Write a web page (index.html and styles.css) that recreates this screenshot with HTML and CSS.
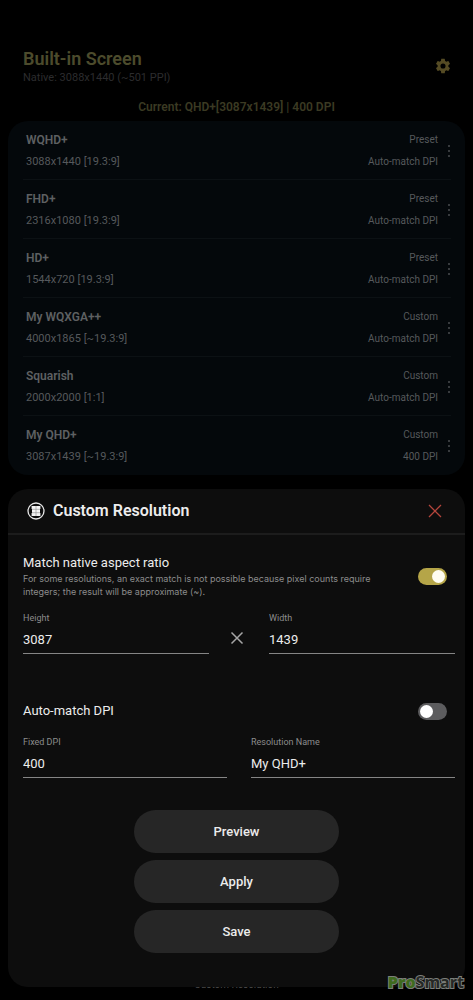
FILE: index.html
```html
<!DOCTYPE html>
<html lang="en">
<head>
<meta charset="utf-8">
<meta name="viewport" content="width=device-width, initial-scale=1">
<title>Custom Resolution</title>
<link rel="stylesheet" href="styles.css">
</head>
<body>
<div class="app">
  <header class="top">
    <div>
      <h1 class="top-title">Built-in Screen</h1>
      <p class="top-native">Native: 3088x1440 (~501 PPI)</p>
    </div>
    <button class="icon-btn gear" aria-label="Settings">
      <svg viewBox="0 0 24 24" width="18" height="18"><path fill="currentColor" d="M19.14 12.94c.04-.3.06-.61.06-.94s-.02-.64-.07-.94l2.03-1.58a.49.49 0 0 0 .12-.61l-1.92-3.32a.49.49 0 0 0-.59-.22l-2.39.96a7 7 0 0 0-1.62-.94l-.36-2.54A.48.48 0 0 0 13.920 2.400h-3.840c-.24 0-.43.17-.47.41l-.36 2.540c-.59.24-1.130.57-1.620.94l-2.390-.96a.48.48 0 0 0-.59.22L2.740 8.870a.48.48 0 0 0 .12.61l2.030 1.580c-.05.3-.09.63-.09.94s.02.64.07.94l-2.030 1.580a.49.49 0 0 0-.12.610l1.920 3.320c.12.22.37.29.59.22l2.390-.96c.5.38 1.030.7 1.620.94l.36 2.540c.05.24.24.41.48.41h3.840c.24 0 .44-.17.47-.41l.36-2.540a6.700 6.700 0 0 0 1.620-.94l2.390.96c.22.08.47 0 .59-.22l1.920-3.320a.48.48 0 0 0-.12-.61zM12 15.400a3.400 3.400 0 1 1 0-6.800 3.400 3.400 0 0 1 0 6.800z"/></svg>
    </button>
  </header>
  <p class="current">Current: QHD+[3087x1439] | 400 DPI</p>

  <ul class="presets">
    <li class="preset">
      <div class="lines"><strong>WQHD+</strong><span>3088x1440 [19.3:9]</span></div>
      <div class="lines meta"><span>Preset</span><span>Auto-match DPI</span></div>
      <button class="icon-btn more" aria-label="More options for WQHD+"><i></i><i></i><i></i></button>
    </li>
    <li class="preset">
      <div class="lines"><strong>FHD+</strong><span>2316x1080 [19.3:9]</span></div>
      <div class="lines meta"><span>Preset</span><span>Auto-match DPI</span></div>
      <button class="icon-btn more" aria-label="More options for FHD+"><i></i><i></i><i></i></button>
    </li>
    <li class="preset">
      <div class="lines"><strong>HD+</strong><span>1544x720 [19.3:9]</span></div>
      <div class="lines meta"><span>Preset</span><span>Auto-match DPI</span></div>
      <button class="icon-btn more" aria-label="More options for HD+"><i></i><i></i><i></i></button>
    </li>
    <li class="preset">
      <div class="lines"><strong>My WQXGA++</strong><span>4000x1865 [~19.3:9]</span></div>
      <div class="lines meta"><span>Custom</span><span>Auto-match DPI</span></div>
      <button class="icon-btn more" aria-label="More options for My WQXGA++"><i></i><i></i><i></i></button>
    </li>
    <li class="preset">
      <div class="lines"><strong>Squarish</strong><span>2000x2000 [1:1]</span></div>
      <div class="lines meta"><span>Custom</span><span>Auto-match DPI</span></div>
      <button class="icon-btn more" aria-label="More options for Squarish"><i></i><i></i><i></i></button>
    </li>
    <li class="preset">
      <div class="lines"><strong>My QHD+</strong><span>3087x1439 [~19.3:9]</span></div>
      <div class="lines meta"><span>Custom</span><span>400 DPI</span></div>
      <button class="icon-btn more" aria-label="More options for My QHD+"><i></i><i></i><i></i></button>
    </li>
  </ul>

  <form class="sheet">
    <div class="sheet-head">
      <svg class="logo" viewBox="0 0 18 18" width="18" height="18">
        <circle cx="9" cy="9" r="8" fill="none" stroke="#e8e8e8" stroke-width="1.300"/>
        <path fill="#f4f4f4" d="M4.600 4h8.800v3H13v4h.4v3H4.600v-3H5V7h-.4z"/>
        <path stroke="#8a8a8a" stroke-width=".6" d="M9 4v10M5 7.300h8M5 10.700h8"/>
      </svg>
      <h2 class="sheet-title">Custom Resolution</h2>
      <button type="button" class="icon-btn close" aria-label="Close">
        <svg viewBox="0 0 14 14" width="14" height="14"><path d="M1 1l12 12M13 1L1 13" stroke="currentColor" stroke-width="1.300"/></svg>
      </button>
    </div>
    <div class="sheet-body">
      <div class="option">
        <div>
          <label class="option-name" for="aspect">Match native aspect ratio</label>
          <p class="hint">For some resolutions, an exact match is not possible because pixel counts require integers; the result will be approximate (~).</p>
        </div>
        <input class="switch" type="checkbox" id="aspect" checked>
      </div>
      <div class="fields size-fields">
        <div class="field"><label for="height">Height</label><input id="height" type="text" value="3087"></div>
        <svg class="times" viewBox="0 0 14 14" width="14" height="14"><path d="M1.500 1.500l11 11M12.500 1.500l-11 11" stroke="currentColor" stroke-width="1.500"/></svg>
        <div class="field"><label for="width">Width</label><input id="width" type="text" value="1439"></div>
      </div>
      <div class="option dpi">
        <label class="option-name" for="auto">Auto-match DPI</label>
        <input class="switch" type="checkbox" id="auto">
      </div>
      <div class="fields">
        <div class="field"><label for="dpi">Fixed DPI</label><input id="dpi" type="text" value="400"></div>
        <div class="field"><label for="name">Resolution Name</label><input id="name" type="text" value="My QHD+"></div>
      </div>
      <div class="actions">
        <button type="button" class="action">Preview</button>
        <button type="button" class="action">Apply</button>
        <button type="button" class="action">Save</button>
      </div>
    </div>
  </form>
  <div class="behind">Custom Resolution</div>
  <div class="watermark"><b>Pro</b>Smart</div>
</div>
</body>
</html>
```
FILE: styles.css
```css
* { box-sizing: border-box; }
body {
  margin: 0;
  background: #000;
  font-family: Roboto, "Liberation Sans", sans-serif;
}
h1, h2, p, ul { margin: 0; padding: 0; }
button, input { font: inherit; color: inherit; }
.app {
  position: relative;
  min-height: 100vh;
  padding: 48px 8px 0;
  overflow: hidden;
}
.icon-btn {
  display: grid;
  place-items: center;
  padding: 0;
  border: 0;
  background: none;
}

.top {
  display: flex;
  justify-content: space-between;
  align-items: center;
  padding: 0 13px 0 15px;
}
.top-title {
  font-size: 18px;
  line-height: 22px;
  font-weight: 600;
  color: #4c4b2c;
}
.top-native {
  font-size: 11px;
  line-height: 16px;
  color: #2c2c2e;
}
.gear {
  padding-bottom: 3px;
  color: #554b24;
}
.current {
  margin-top: 11px;
  text-align: center;
  font-size: 12px;
  line-height: 20px;
  font-weight: 600;
  color: #3b3a23;
}

.presets {
  margin-top: 4px;
  list-style: none;
  background: #04080b;
  border-radius: 20px;
}
.preset {
  display: flex;
  align-items: center;
  margin: 0 14px 0 15px;
  padding: 9px 0 7px 3px;
  border-bottom: 1px solid #0c1114;
}
.preset:last-child { border-bottom-color: transparent; }
.lines {
  display: grid;
  gap: 2px;
  font-size: 11px;
  line-height: 20px;
  color: #56595c;
}
.lines strong {
  font-size: 12px;
  font-weight: 600;
  color: #5e6062;
}
.meta {
  margin-left: auto;
  text-align: right;
  font-size: 10px;
}
.more {
  width: 4px;
  margin-left: 9px;
  gap: 3px;
}
.more i {
  width: 2px;
  height: 2px;
  border-radius: 50%;
  background: #4a4d50;
}

.sheet {
  position: relative;
  z-index: 1;
  margin-top: 14px;
  background: #0d0d0d;
  border-radius: 20px;
  color: #ececec;
}
.sheet-head {
  display: flex;
  align-items: center;
  height: 46px;
  padding: 0 23px 0 19px;
  border-bottom: 2px solid #1c1c1c;
}
.sheet-title {
  margin-left: 8px;
  font-size: 16px;
  line-height: 22px;
  font-weight: 600;
}
.close {
  margin-left: auto;
  color: #b4453c;
}
.sheet-body { padding: 19px 10px 34px 15px; }
.option {
  display: flex;
  align-items: center;
  justify-content: space-between;
  padding-right: 8px;
}
.option-name {
  display: block;
  font-size: 13px;
  line-height: 18px;
}
.hint {
  max-width: 360px;
  font-family: Inter, "Liberation Sans", sans-serif;
  font-size: 9px;
  line-height: 13px;
  color: #8c8c8c;
}
.switch {
  appearance: none;
  flex: none;
  width: 29px;
  height: 17px;
  margin: 0;
  padding: 2px;
  border-radius: 9px;
  background: #5c5c5e;
}
.switch::before {
  content: "";
  display: block;
  width: 13px;
  height: 13px;
  border-radius: 50%;
  background: #fff;
}
.switch:checked { background: #b5a548; }
.switch:checked::before { margin-left: auto; background: #fffdf0; }
.fields {
  display: flex;
  gap: 24px;
  margin-top: 15px;
}
.size-fields {
  gap: 0;
  margin-top: 13px;
}
.field {
  flex: 1;
  min-width: 0;
}
.field label {
  display: block;
  font-size: 9px;
  line-height: 15px;
  color: #8c8c8c;
}
.field input {
  display: block;
  width: 100%;
  height: 28px;
  padding: 0 0 1px;
  border: 0;
  border-bottom: 1px solid #858585;
  border-radius: 0;
  background: none;
  font-size: 13px;
  outline: none;
}
.times {
  margin: 20px 25px 0 21px;
  color: #a6a6a6;
}
.dpi { margin-top: 48px; }
.actions {
  display: grid;
  justify-content: center;
  grid-template-columns: 205px;
  gap: 7px;
  margin-top: 32px;
  padding-right: 5px;
}
.action {
  height: 43px;
  padding: 0;
  border: 0;
  border-radius: 22px;
  background: #262626;
  font-size: 13px;
  font-weight: 500;
}
.behind {
  margin-top: -9px;
  text-align: center;
  font-size: 10px;
  line-height: 14px;
  color: #4a4a4a;
}
.watermark {
  position: absolute;
  z-index: 2;
  right: 9px;
  bottom: 8px;
  font: 700 16px/20px "Open Sans", sans-serif;
  color: #252825;
  -webkit-text-stroke: 2px #7c7f7b;
  paint-order: stroke fill;
}
.watermark b { color: #3f6b1e; }
```
